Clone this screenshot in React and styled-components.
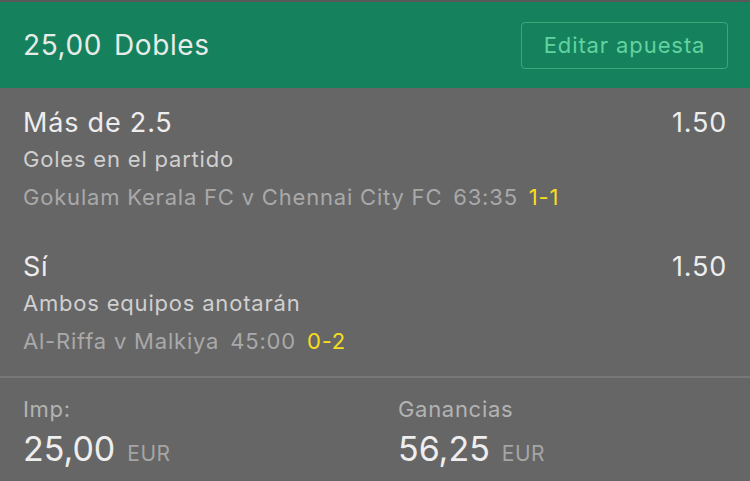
import React from "react";
import styled, { createGlobalStyle } from "styled-components";

const Global = createGlobalStyle`
  html, body { margin: 0; padding: 0; background: #666666; }
  body { font-family: "Inter", "Liberation Sans", sans-serif; -webkit-font-smoothing: antialiased; }
`;

const Page = styled.div`
  width: 750px;
  height: 481px;
  background: #666666;
  border-top: 2px solid #595959;
  box-sizing: border-box;
  overflow: hidden;
`;

const Header = styled.header`
  height: 86px;
  background: #15815d;
  display: flex;
  align-items: center;
  justify-content: space-between;
  padding: 0 22px 0 23px;
`;

const Title = styled.div`
  color: #e8ece9;
  font-size: 28px;
  letter-spacing: 0.6px;
  display: flex;
  gap: 12px;
`;

const EditButton = styled.button`
  width: 207px;
  height: 47px;
  background: transparent;
  border: 1.5px solid rgba(110, 210, 160, 0.45);
  border-radius: 4px;
  color: #62d3a0;
  font-family: inherit;
  font-size: 22px;
  letter-spacing: 0.9px;
  padding: 0;
`;

const Selection = styled.section`
  padding: 16px 23px;
`;

const TopRow = styled.div`
  display: flex;
  justify-content: space-between;
  align-items: center;
  height: 36px;
  font-size: 27px;
  letter-spacing: 0.8px;
  color: #ededed;
`;

const Market = styled.div`
  height: 38px;
  line-height: 38px;
  font-size: 22px;
  letter-spacing: 0.8px;
  color: #d0d0d0;
`;

const Match = styled.div`
  height: 38px;
  line-height: 38px;
  font-size: 22px;
  letter-spacing: 0.8px;
  color: #a9a9a9;
  display: flex;
  gap: 11px;
`;

const Score = styled.span`
  color: #f7dd1e;
`;

const Divider = styled.hr`
  margin: 0;
  border: 0;
  height: 2px;
  background: #777777;
`;

const Footer = styled.div`
  display: grid;
  grid-template-columns: 375px 1fr;
  padding: 19px 0 0 23px;
`;

const Label = styled.div`
  font-size: 22px;
  line-height: 24px;
  letter-spacing: 0.7px;
  color: #b3b3b3;
`;

const Amount = styled.div`
  margin-top: 8px;
  font-size: 34px;
  line-height: 40px;
  color: #eeeeee;
  display: flex;
  align-items: baseline;
  gap: 12px;
`;

const Currency = styled.span`
  font-size: 21px;
  letter-spacing: 0.5px;
  color: #a5a5a5;
`;

const selections = [
  {
    pick: "Más de 2.5",
    odds: "1.50",
    market: "Goles en el partido",
    teams: "Gokulam Kerala FC v Chennai City FC",
    time: "63:35",
    score: "1-1",
  },
  {
    pick: "Sí",
    odds: "1.50",
    market: "Ambos equipos anotarán",
    teams: "Al-Riffa v Malkiya",
    time: "45:00",
    score: "0-2",
  },
];

export default function App() {
  return (
    <>
      <Global />
      <Page>
        <Header>
          <Title>
            <span>25,00</span>
            <span>Dobles</span>
          </Title>
          <EditButton>Editar apuesta</EditButton>
        </Header>
        {selections.map((s) => (
          <Selection key={s.pick}>
            <TopRow>
              <span>{s.pick}</span>
              <span>{s.odds}</span>
            </TopRow>
            <Market>{s.market}</Market>
            <Match>
              <span>{s.teams}</span>
              <span>{s.time}</span>
              <Score>{s.score}</Score>
            </Match>
          </Selection>
        ))}
        <Divider />
        <Footer>
          <div>
            <Label>Imp:</Label>
            <Amount>
              25,00 <Currency>EUR</Currency>
            </Amount>
          </div>
          <div>
            <Label>Ganancias</Label>
            <Amount>
              56,25 <Currency>EUR</Currency>
            </Amount>
          </div>
        </Footer>
      </Page>
    </>
  );
}
